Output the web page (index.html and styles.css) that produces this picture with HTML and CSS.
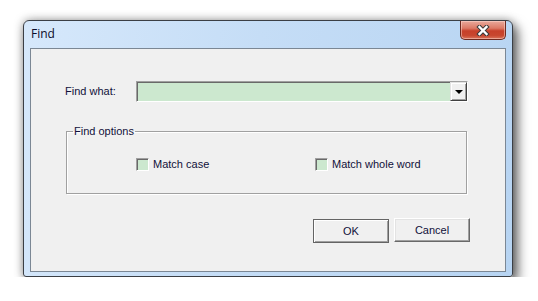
FILE: index.html
```html
<!DOCTYPE html>
<html>
<head>
<meta charset="utf-8">
<link rel="stylesheet" href="styles.css">
</head>
<body>
<div class="window">
  <div class="titlebar">
    <span class="title">Find</span>
    <div class="close">
      <svg width="16" height="11" viewBox="0 0 16 11">
        <path d="M4.5 2 L11.5 9 M11.5 2 L4.5 9" stroke="#3a3a3a" stroke-width="4.4" stroke-linecap="square" fill="none"/>
        <path d="M4.5 2 L11.5 9 M11.5 2 L4.5 9" stroke="#ffffff" stroke-width="2.4" stroke-linecap="square" fill="none"/>
      </svg>
    </div>
  </div>
  <div class="client">
    <div class="find-row">
      <span class="label">Find what:</span>
      <div class="combo">
        <div class="combo-field"></div>
        <div class="combo-btn"><span class="arrow"></span></div>
      </div>
    </div>
    <fieldset class="group">
      <legend>Find options</legend>
      <div class="checks">
        <label class="check first"><span class="box"></span>Match case</label>
        <label class="check"><span class="box"></span>Match whole word</label>
      </div>
    </fieldset>
    <div class="buttons">
      <div class="btn default">OK</div>
      <div class="btn">Cancel</div>
    </div>
  </div>
</div>
</body>
</html>
```
FILE: styles.css
```css
html, body {
  margin: 0;
  padding: 0;
  background: #ffffff;
}
body {
  font-family: "Liberation Sans", Arial, sans-serif;
  font-size: 11px;
  color: #10103a;
}
.window {
  box-sizing: border-box;
  width: 490px;
  height: 257px;
  margin: 20px 0 0 23px;
  border: 1px solid #3b3f45;
  border-radius: 6px 6px 3px 3px;
  background: linear-gradient(100deg, #d6e8fb 0%, #c5ddf6 45%, #b7d4f2 100%);
  box-shadow: 0 0 10px rgba(0,0,0,0.35), 5px 6px 12px rgba(0,0,0,0.55);
  padding: 0 6px 4px 6px;
}
.titlebar {
  height: 27px;
  display: flex;
  justify-content: space-between;
  align-items: flex-start;
}
.title {
  font-family: "Open Sans", "Noto Sans", sans-serif;
  font-size: 12px;
  color: #0b0b2a;
  padding: 5px 0 0 1px;
  line-height: 16px;
}
.close {
  box-sizing: border-box;
  width: 46px;
  height: 19px;
  border: 1px solid #6e2a20;
  border-top: none;
  border-radius: 0 0 5px 5px;
  background: linear-gradient(#e9a99c 0%, #dc7a66 40%, #c7402a 55%, #c8472f 80%, #d9745c 100%);
  box-shadow: inset 0 0 0 1px rgba(255,220,210,0.5);
  display: flex;
  align-items: center;
  justify-content: center;
}
.close svg { display: block; }
.client {
  box-sizing: border-box;
  height: 224px;
  border: 1px solid #7b8794;
  background: #f0f0f0;
  padding-left: 34px;
}
.find-row {
  display: flex;
  align-items: center;
  margin-top: 32px;
}
.label {
  width: 71px;
  line-height: 21px;
}
.combo {
  box-sizing: border-box;
  width: 332px;
  height: 21px;
  display: flex;
  border-top: 1px solid #a0a0a0;
  border-left: 1px solid #a0a0a0;
  border-right: 1px solid #ffffff;
  border-bottom: 1px solid #ffffff;
}
.combo-field {
  flex: 1;
  background: #cce8cf;
  border-top: 1px solid #696969;
  border-left: 1px solid #696969;
}
.combo-btn {
  box-sizing: border-box;
  width: 17px;
  height: 19px;
  background: #f0f0f0;
  border-top: 1px solid #e3e3e3;
  border-left: 1px solid #e3e3e3;
  border-right: 1px solid #404040;
  border-bottom: 1px solid #404040;
  box-shadow: inset 1px 1px 0 #ffffff, inset -1px -1px 0 #a0a0a0;
  display: flex;
  align-items: center;
  justify-content: center;
}
.arrow {
  width: 0;
  height: 0;
  border-left: 4px solid transparent;
  border-right: 4px solid transparent;
  border-top: 4px solid #000;
  margin-top: 1px;
}
.group {
  box-sizing: border-box;
  width: 401px;
  margin: 23px 0 0 1px;
  padding: 0;
  border: 1px solid #a0a0a0;
  box-shadow: 1px 1px 0 #ffffff, inset 1px 1px 0 #ffffff;
  min-width: 0;
}
.group legend {
  margin-left: 6px;
  padding: 0 1px;
  line-height: 13px;
  font-size: 11px;
}
.checks {
  display: flex;
  padding: 20px 0 22px 69px;
}
.check {
  display: flex;
  align-items: center;
  line-height: 13px;
}
.check.first {
  width: 179px;
}
.box {
  box-sizing: border-box;
  width: 13px;
  height: 13px;
  margin-right: 4px;
  background: #cce8cf;
  border-top: 1px solid #a0a0a0;
  border-left: 1px solid #a0a0a0;
  border-right: 1px solid #ffffff;
  border-bottom: 1px solid #ffffff;
  box-shadow: inset 1px 1px 0 #696969;
}
.buttons {
  display: flex;
  justify-content: flex-end;
  gap: 5px;
  padding-right: 35px;
  margin-top: 24px;
}
.btn {
  box-sizing: border-box;
  width: 76px;
  height: 24px;
  display: flex;
  align-items: center;
  justify-content: center;
  background: #f0f0f0;
  border-top: 1px solid #ffffff;
  border-left: 1px solid #ffffff;
  border-right: 1px solid #696969;
  border-bottom: 1px solid #696969;
  box-shadow: inset -1px -1px 0 #a0a0a0, inset 1px 1px 0 #e3e3e3;
  color: #10103a;
}
.btn.default {
  border: 1px solid #646464;
  box-shadow: inset 1px 1px 0 #ffffff, inset -1px -1px 0 #a0a0a0;
  margin-top: 1px;
}
```
